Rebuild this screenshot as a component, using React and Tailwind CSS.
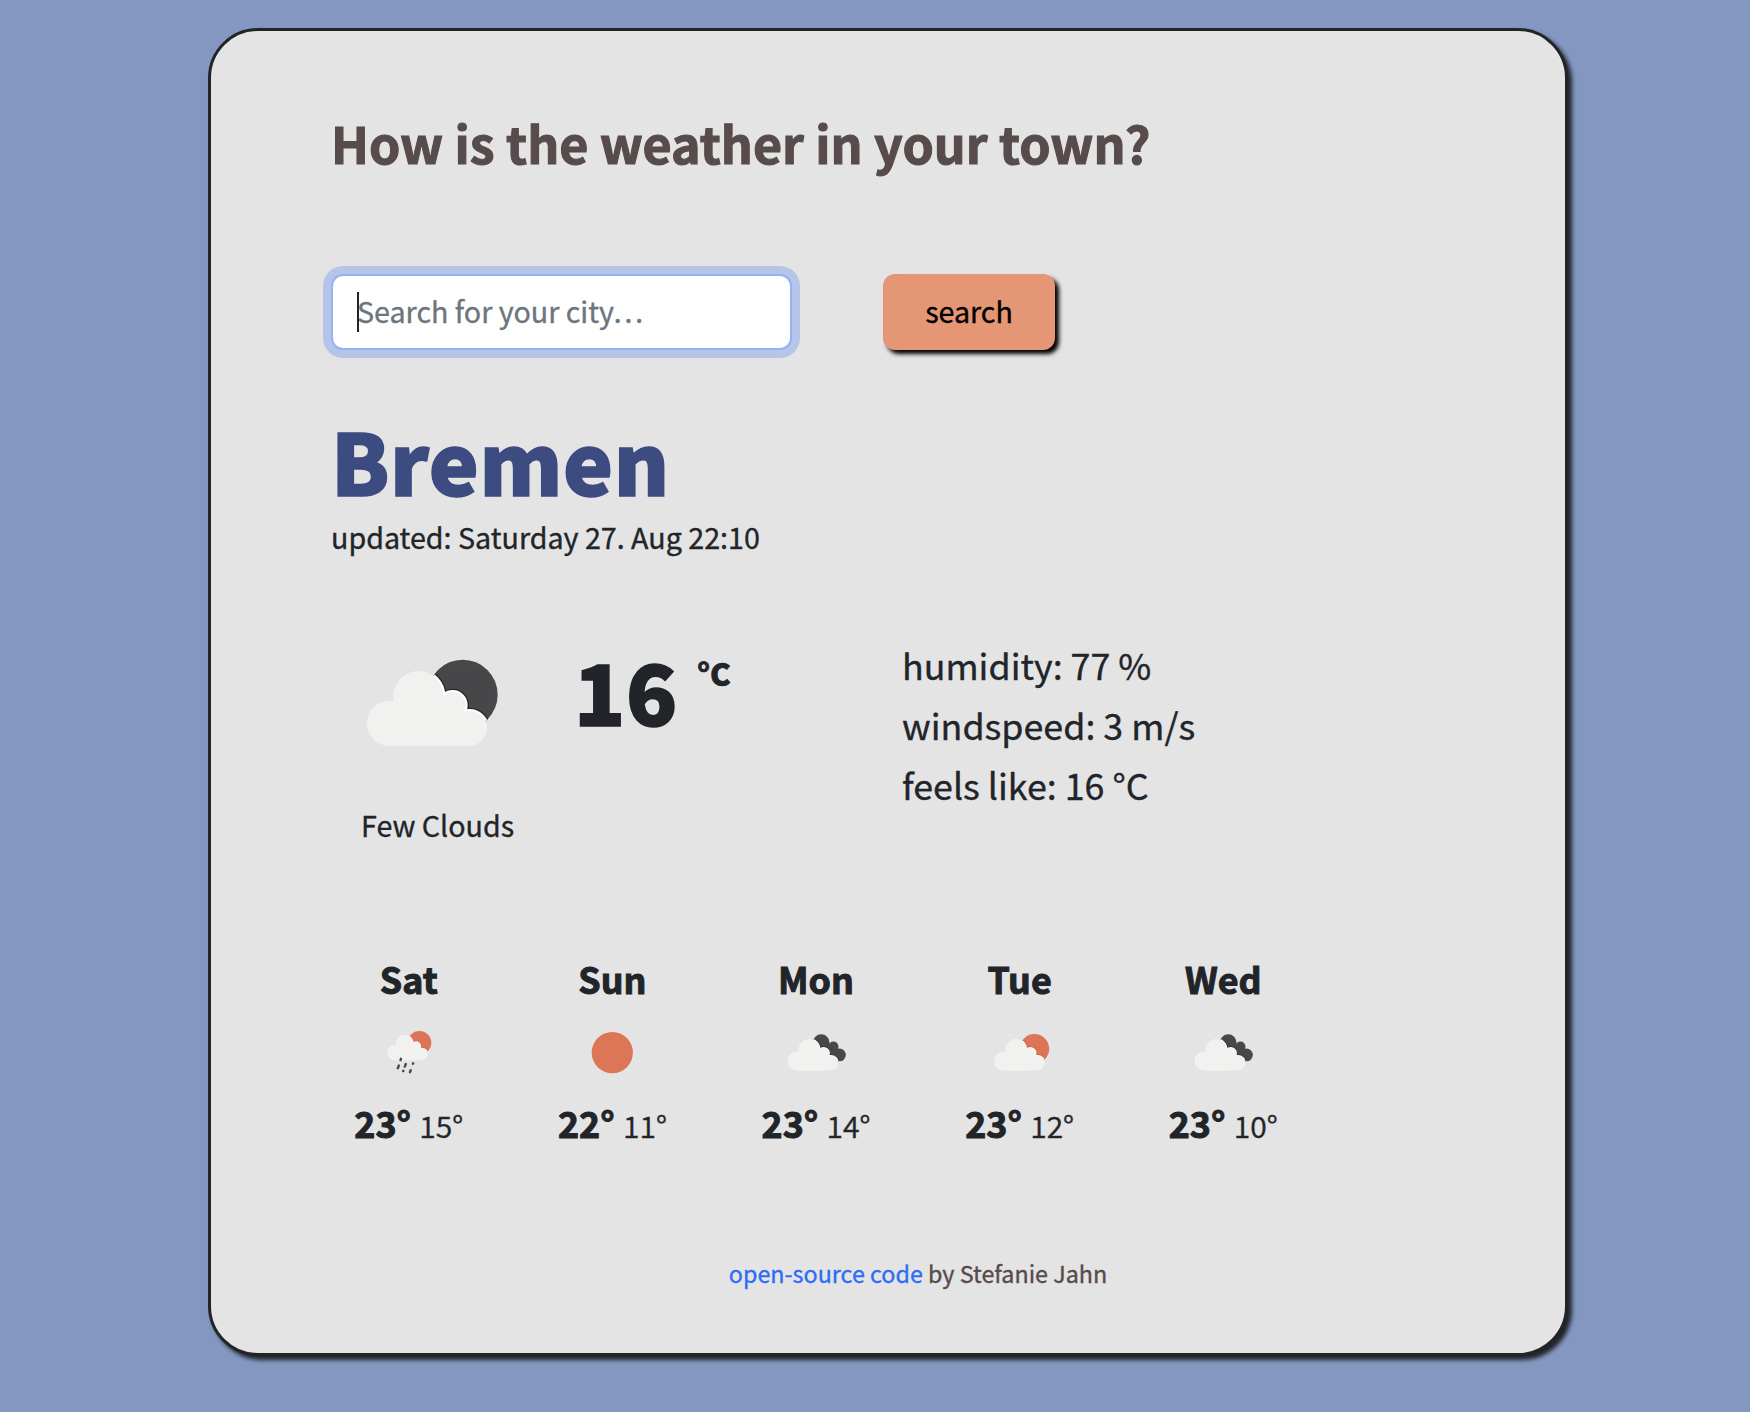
import { useId } from "react";

const INK = "#48484a";
const SUN = "#dc7657";

function CloudShape() {
  return (
    <>
      <circle cx="148" cy="280" r="68" />
      <circle cx="234" cy="198" r="75" />
      <circle cx="337" cy="225" r="39" />
      <circle cx="388" cy="295" r="52" />
      <rect x="148" y="214" width="190" height="134" />
      <rect x="148" y="248" width="240" height="100" />
    </>
  );
}

function Disc() {
  return <circle cx="367" cy="194" r="105" />;
}

function BackCloud() {
  return (
    <>
      <circle cx="320" cy="149" r="59" />
      <circle cx="407" cy="178" r="36" />
      <circle cx="450" cy="237" r="45" />
      <path d="M320 149L400 160L450 237L440 280L300 260Z" />
    </>
  );
}

function CloudOver({ Back, color, shade }) {
  const id = useId();
  return (
    <>
      <clipPath id={id}>
        <Back />
      </clipPath>
      <g fill={color}>
        <Back />
      </g>
      <g clipPath={`url(#${id})`} fill="none">
        <g stroke={shade} strokeWidth="20" opacity="0.6">
          <CloudShape />
        </g>
        <g stroke="#ffffff" strokeWidth="12">
          <CloudShape />
        </g>
      </g>
      <g fill="#f1f1f0">
        <CloudShape />
      </g>
    </>
  );
}

function SmallIcon({ kind }) {
  return (
    <svg className="block h-24 w-25" viewBox="0 0 100 96">
      {kind === "sun" && <circle cx="50.3" cy="50.6" r="20.6" fill={SUN} />}
      {kind === "few" && (
        <g transform="translate(24.1 68.5) scale(.1405) translate(-80 -348)">
          <CloudOver Back={Disc} color={SUN} shade="#c4532f" />
        </g>
      )}
      {kind === "broken" && (
        <g transform="translate(21.5 68.5) scale(.1405) translate(-80 -348)">
          <CloudOver Back={BackCloud} color={INK} shade="#222222" />
        </g>
      )}
      {kind === "rain" && (
        <g transform="translate(0 .7)">
          <g transform="translate(28 57.5) scale(.113) translate(-80 -348)">
            <CloudOver Back={Disc} color={SUN} shade="#c4532f" />
          </g>
          <g stroke={INK} strokeWidth="2.4" strokeLinecap="round">
            <path d="M41.9 56.1L41.5 57.4M39.8 62.9L38.8 65.5M46.8 61.3L45.8 63.9M54.2 60.5L53.9 61.1M44.4 68L44.2 68.4M51.7 67.5L50.9 69.5" />
          </g>
        </g>
      )}
    </svg>
  );
}

const days = [
  { day: "Sat", kind: "rain", max: 23, min: 15 },
  { day: "Sun", kind: "sun", max: 22, min: 11 },
  { day: "Mon", kind: "broken", max: 23, min: 14 },
  { day: "Tue", kind: "few", max: 23, min: 12 },
  { day: "Wed", kind: "broken", max: 23, min: 10 },
];

export default function App() {
  return (
    <div className="h-[1412px] w-[1750px] overflow-hidden bg-[#8497c1] pt-7 pl-52 font-['Noto_Sans_CJK_SC','Noto_Sans',sans-serif] text-[28.65px] leading-[48px] text-[#212529] [-webkit-text-stroke:0.35px]">
      <main className="flex h-[1328px] w-[1360px] flex-col rounded-[50px] border-3 border-[#212529] bg-[#e4e4e4] pt-[81px] pl-[120px] shadow-[4px_4px_4px_#212529]">
        <h1 className="text-[50.15px] leading-[60px] font-bold text-[#584b4b] [-webkit-text-stroke:1.1px]">
          How is the weather in your town?
        </h1>

        <form className="mt-[102px] flex" onSubmit={(e) => e.preventDefault()}>
          <div className="relative">
            <input
              type="text"
              placeholder="Search for your city…"
              className="h-[76px] w-[461px] rounded-xl border-2 border-[#90b4f5] bg-white px-6 pb-1 text-[28.65px] caret-transparent shadow-[0_0_0_8px_#b6c4e8] outline-none [-webkit-text-stroke:0.35px_#6c757d] placeholder:text-[#6c757d] placeholder:opacity-100"
            />
            <span className="absolute top-[18px] left-[26px] h-10 w-0.5 bg-[#212529]" />
          </div>
          <button
            type="submit"
            className="ml-[91px] h-[76px] w-[172px] rounded-xl bg-[#e49675] pb-0.5 text-black shadow-[4px_4px_4px_black]"
          >
            search
          </button>
        </form>

        <h2 className="mt-[61px] text-[84.2px] leading-[96px] font-black tracking-[0.6px] text-[#3c4b80] [-webkit-text-stroke:1.6px]">
          Bremen
        </h2>
        <p className="mt-[6px]">updated: Saturday 27. Aug 22:10</p>

        <section className="mt-[73px] flex h-[214px] items-start">
          <div className="ml-[30px] flex w-[213px] flex-col">
            <svg className="mt-[25px] ml-[6px] block h-[88px] w-[132px]" viewBox="80 87 396 264">
              <CloudOver Back={Disc} color={INK} shade="#111111" />
            </svg>
            <p className="mt-[54px]">Few Clouds</p>
          </div>
          <div className="flex w-[328px] items-start font-black">
            <span className="mt-[7px] text-[84.2px] leading-[96px] tracking-[0.7px] [-webkit-text-stroke:1.6px]">
              16
            </span>
            <span className="mt-[15px] ml-[19px] text-[31px] [-webkit-text-stroke:0.7px]">°C</span>
          </div>
          <ul className="text-[35.8px] leading-[60px]">
            <li>humidity: 77 %</li>
            <li>windspeed: 3 m/s</li>
            <li>feels like: 16 °C</li>
          </ul>
        </section>

        <section className="mt-[106px] ml-[-24px] grid w-[1018px] grid-cols-5">
          {days.map(({ day, kind, max, min }) => (
            <div key={day} className="flex flex-col items-center">
              <div className="text-[35.8px] font-bold [-webkit-text-stroke:1px]">{day}</div>
              <SmallIcon kind={kind} />
              <div className="flex items-baseline gap-[8.3px]">
                <span className="text-[35.8px] font-bold [-webkit-text-stroke:1px]">{max}°</span>
                <span className="text-[30px] font-[350] [-webkit-text-stroke:0.4px]">{min}°</span>
              </div>
            </div>
          ))}
        </section>

        <footer className="mt-[106px] w-[1174px] text-center text-[23.3px] leading-9 text-[#584b4b]">
          <a href="#source" className="text-[#2f6cf6]">
            open-source code
          </a>{" "}
          by Stefanie Jahn
        </footer>
      </main>
    </div>
  );
}
